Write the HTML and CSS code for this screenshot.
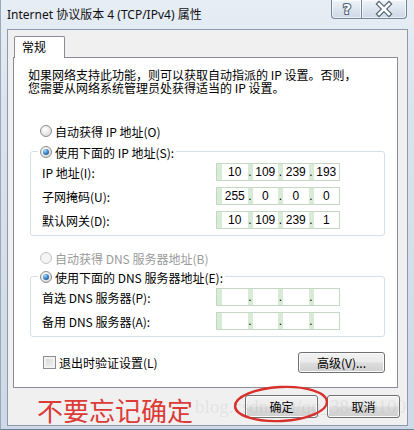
FILE: index.html
```html
<!DOCTYPE html>
<html lang="zh-CN">
<head>
<meta charset="utf-8">
<title>Internet 协议版本 4 (TCP/IPv4) 属性</title>
<link rel="stylesheet" href="styles.css">
</head>
<body>
<div class="window">
  <div class="titlebar">
    <span class="title">Internet 协议版本 4 (TCP/IPv4) 属性</span>
    <div class="caption-btns">
      <div class="cbtn help">
        <svg width="28" height="18" viewBox="0 0 28 18"><text x="14" y="14" text-anchor="middle" class="qmark">?</text></svg>
      </div>
      <div class="cbtn close">
        <svg width="44" height="18" viewBox="0 0 44 18">
          <path d="M17 4 L27 14 M27 4 L17 14" stroke="#56667a" stroke-width="5" stroke-linecap="square"/>
          <path d="M17 4 L27 14 M27 4 L17 14" stroke="#ffffff" stroke-width="2.6" stroke-linecap="square"/>
        </svg>
      </div>
    </div>
  </div>

  <div class="client">
    <div class="tabs"><div class="tab">常规</div></div>
    <div class="panel">
      <p class="desc">如果网络支持此功能，则可以获取自动指派的 IP 设置。否则，<br>您需要从网络系统管理员处获得适当的 IP 设置。</p>

      <div class="opt opt-first"><span class="radio"></span><span>自动获得 IP 地址(O)</span></div>

      <div class="group">
        <div class="legend"><span class="radio checked"></span><span>使用下面的 IP 地址(S):</span></div>
        <div class="rows">
          <div class="row"><span class="lbl">IP 地址(I):</span>
            <div class="ip"><span class="seg"><span class="dot"></span><span class="num">10</span></span><span class="seg"><span class="dot">.</span><span class="num">109</span></span><span class="seg"><span class="dot">.</span><span class="num">239</span></span><span class="seg"><span class="dot">.</span><span class="num">193</span></span></div>
          </div>
          <div class="row"><span class="lbl">子网掩码(U):</span>
            <div class="ip"><span class="seg"><span class="dot"></span><span class="num">255</span></span><span class="seg"><span class="dot">.</span><span class="num">0</span></span><span class="seg"><span class="dot">.</span><span class="num">0</span></span><span class="seg"><span class="dot">.</span><span class="num">0</span></span></div>
          </div>
          <div class="row"><span class="lbl">默认网关(D):</span>
            <div class="ip"><span class="seg"><span class="dot"></span><span class="num">10</span></span><span class="seg"><span class="dot">.</span><span class="num">109</span></span><span class="seg"><span class="dot">.</span><span class="num">239</span></span><span class="seg"><span class="dot">.</span><span class="num">1</span></span></div>
          </div>
        </div>
      </div>

      <div class="opt opt-dns disabled"><span class="radio"></span><span>自动获得 DNS 服务器地址(B)</span></div>

      <div class="group group-dns">
        <div class="legend"><span class="radio checked"></span><span>使用下面的 DNS 服务器地址(E):</span></div>
        <div class="rows">
          <div class="row"><span class="lbl">首选 DNS 服务器(P):</span>
            <div class="ip"><span class="seg"><span class="dot"></span><span class="num"></span></span><span class="seg"><span class="dot">.</span><span class="num"></span></span><span class="seg"><span class="dot">.</span><span class="num"></span></span><span class="seg"><span class="dot">.</span><span class="num"></span></span></div>
          </div>
          <div class="row"><span class="lbl">备用 DNS 服务器(A):</span>
            <div class="ip"><span class="seg"><span class="dot"></span><span class="num"></span></span><span class="seg"><span class="dot">.</span><span class="num"></span></span><span class="seg"><span class="dot">.</span><span class="num"></span></span><span class="seg"><span class="dot">.</span><span class="num"></span></span></div>
          </div>
        </div>
      </div>

      <div class="panel-foot">
        <div class="check-row"><span class="checkbox"></span><span>退出时验证设置(L)</span></div>
        <div class="btn btn-adv">高级(V)...</div>
      </div>
    </div>

    <div class="footer">
      <span class="note">不要忘记确定</span>
      <div class="btn btn-ok">确定</div>
      <div class="btn btn-cancel">取消</div>
    </div>

    <span class="watermark">blog.csdn.net/qq_38410100</span>
    <svg class="circle-mark" width="100" height="42" viewBox="0 0 100 42">
      <ellipse cx="50" cy="21" rx="46" ry="17" fill="none" stroke="#d8302c" stroke-width="2.4" transform="rotate(-3 50 21)"/>
    </svg>
  </div>
</div>
</body>
</html>
```
FILE: styles.css
```css
html, body {
  margin: 0;
  padding: 0;
}
body {
  width: 414px;
  height: 430px;
  overflow: hidden;
  font-family: "Noto Sans CJK SC", "Noto Sans", sans-serif;
  font-size: 12px;
  color: #000;
}
.window {
  width: 414px;
  height: 430px;
  box-sizing: border-box;
  display: flex;
  flex-direction: column;
  background: linear-gradient(180deg, #e6edf5 0%, #dae4ee 25%, #cdd9e6 100%);
  border-left: 1px solid #9aa8b8;
  border-bottom: 1px solid #6f7f92;
}
.titlebar {
  height: 29px;
  display: flex;
  align-items: flex-start;
  padding: 0 7px 0 6px;
  box-sizing: border-box;
}
.title {
  margin-top: 7px;
  line-height: 16px;
  font-family: "Noto Sans", "Noto Sans CJK SC", sans-serif;
  font-size: 12px;
  color: #111;
}
.caption-btns {
  margin-left: auto;
  display: flex;
}
.cbtn {
  height: 19px;
  box-sizing: border-box;
  border: 1px solid #76879b;
  border-top: none;
  background: linear-gradient(180deg, #eef3f8 0%, #dde6ef 50%, #ccd8e5 100%);
  box-shadow: inset 0 0 0 1px rgba(255,255,255,0.6);
  display: flex;
  align-items: center;
  justify-content: center;
}
.cbtn.help {
  width: 30px;
  border-radius: 0 0 0 4px;
  border-right: none;
}
.cbtn.close {
  width: 46px;
  border-radius: 0 0 4px 0;
}
.qmark {
  font-family: "DejaVu Sans", sans-serif;
  font-weight: bold;
  font-size: 14px;
  fill: #fff;
  stroke: #56667a;
  stroke-width: 2.2px;
  paint-order: stroke;
}
.client {
  position: relative;
  margin: 0 6px 0 6px;
  height: 397px;
  box-sizing: border-box;
  border: 1px solid #8c9aab;
  background: #f0f0f0;
  display: flex;
  flex-direction: column;
}
.tabs {
  margin-top: 6px;
  padding-left: 6px;
  display: flex;
}
.tab {
  position: relative;
  z-index: 1;
  width: 51px;
  height: 22px;
  margin-bottom: -1px;
  box-sizing: border-box;
  border: 1px solid #898c95;
  border-bottom: none;
  border-radius: 2px 2px 0 0;
  background: #fff;
  padding-left: 7px;
  line-height: 20px;
}
.panel {
  margin-left: 5px;
  width: 385px;
  height: 331px;
  box-sizing: border-box;
  border: 1px solid #898c95;
  background: #fff;
  display: flex;
  flex-direction: column;
}
.desc {
  margin: 0;
  padding: 10px 0 0 14px;
  line-height: 13px;
  white-space: nowrap;
}
.opt {
  display: flex;
  align-items: center;
  gap: 3px;
  height: 16px;
  padding-left: 26px;
}
.opt-first { margin-top: 29px; }
.opt-dns { margin-top: 14px; }
.opt.disabled { color: #9a9a9a; }
.radio {
  width: 12px;
  height: 12px;
  box-sizing: border-box;
  border-radius: 50%;
  border: 1px solid #8b8b8b;
  background: radial-gradient(circle at 40% 35%, #ffffff 0%, #e6e6e6 55%, #cfcfcf 100%);
  display: flex;
  align-items: center;
  justify-content: center;
  flex: none;
}
.radio.checked::after {
  content: "";
  width: 6px;
  height: 6px;
  border-radius: 50%;
  background: radial-gradient(circle at 35% 30%, #a9dcf9 0%, #3f86c6 45%, #14477f 100%);
}
.disabled .radio {
  border-color: #c6c6c6;
  background: #f4f4f4;
}
.group {
  display: flex;
  flex-direction: column;
  margin: 12px 12px 0 16px;
  border: 1px solid #d5dfe5;
  border-radius: 3px;
  padding-bottom: 6px;
}
.group-dns { margin-top: 10px; }
.legend {
  display: flex;
  align-self: flex-start;
  align-items: center;
  gap: 3px;
  height: 16px;
  margin: -8px 0 0 7px;
  padding: 0 2px;
  background: #fff;
}
.rows {
  display: flex;
  flex-direction: column;
  gap: 6px;
  margin-top: 3px;
  padding-left: 11px;
}
.row {
  display: flex;
  align-items: center;
  height: 18px;
}
.lbl {
  width: 174px;
  flex: none;
}
.ip {
  display: flex;
  width: 124px;
  height: 18px;
  box-sizing: border-box;
  border: 1px solid #c4d8c4;
  background: #d7ebd7;
  font-family: "Liberation Sans", sans-serif;
  font-size: 12px;
  line-height: 16px;
}
.seg {
  flex: 1;
  display: flex;
}
.dot {
  width: 5px;
  text-align: center;
  flex: none;
}
.num {
  flex: 1;
  background: #fff;
  text-align: center;
}
.panel-foot {
  margin-top: 15px;
  display: flex;
  align-items: center;
  height: 21px;
  padding: 0 12px 0 29px;
}
.check-row {
  display: flex;
  align-items: center;
  gap: 3px;
}
.checkbox {
  width: 13px;
  height: 13px;
  box-sizing: border-box;
  border: 1px solid #8e8f8f;
  background: linear-gradient(135deg, #d6d6d6 0%, #f4f4f4 100%);
  box-shadow: inset 0 0 0 2px #f2f2f2;
}
.btn {
  box-sizing: border-box;
  border: 1px solid #707070;
  border-radius: 3px;
  background: linear-gradient(180deg, #f2f2f2 0%, #ebebeb 48%, #dddddd 52%, #cfcfcf 100%);
  box-shadow: inset 0 0 0 1px #fbfbfb;
  display: flex;
  align-items: center;
  justify-content: center;
}
.btn-adv {
  margin-left: auto;
  width: 87px;
  height: 21px;
}
.footer {
  flex: 1;
  display: flex;
  align-items: center;
  padding: 0 7px 0 29px;
}
.note {
  font-size: 26px;
  line-height: 28px;
  color: #dc3b37;
  margin-top: 6px;
}
.btn-ok {
  margin-left: auto;
  width: 73px;
  height: 23px;
}
.btn-cancel {
  margin-left: 9px;
  width: 73px;
  height: 23px;
}
.watermark {
  position: absolute;
  left: 187px;
  top: 366px;
  font-family: "Liberation Serif", serif;
  font-size: 19px;
  color: rgba(150, 150, 150, 0.16);
  white-space: nowrap;
  pointer-events: none;
}
.circle-mark {
  position: absolute;
  left: 223px;
  top: 353px;
  pointer-events: none;
}
```
